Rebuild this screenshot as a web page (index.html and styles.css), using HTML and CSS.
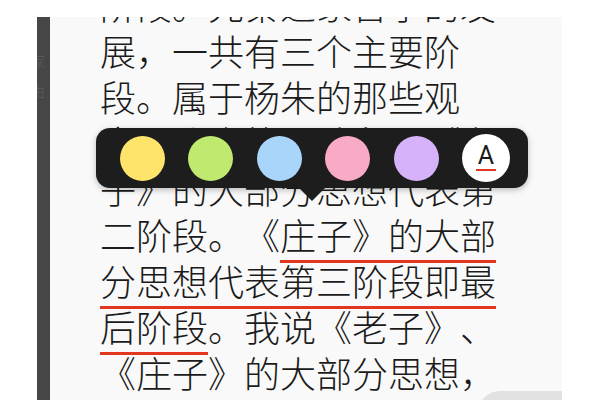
FILE: index.html
```html
<!DOCTYPE html>
<html lang="zh-CN">
<head>
<meta charset="utf-8">
<link rel="stylesheet" href="styles.css">
</head>
<body>
<div class="screen">
  <div class="bar"><div class="bar-text">家<br>由</div></div>
  <div class="page">
    <p class="text">阶段。先秦道家哲学的发展，一共有三个主要阶段。属于杨朱的那些观念，代表第一阶段。《老子》的大部分思想代表第二阶段。《<span class="mark">庄子》的大部分思想代表第三阶段即最后阶段</span>。我说《老子》、《庄子》的大部分思想，</p>
    <div class="toolbar">
      <span class="dot yellow"></span>
      <span class="dot green"></span>
      <span class="dot blue"></span>
      <span class="dot pink"></span>
      <span class="dot purple"></span>
      <span class="dot font-btn"><span class="font-a">A</span></span>
    </div>
    <div class="pill"></div>
  </div>
</div>
</body>
</html>
```
FILE: styles.css
```css
html, body {
  margin: 0;
  padding: 0;
  background: #ffffff;
}
.screen {
  display: flex;
  width: 525px;
  height: 383px;
  padding: 17px 0 0 37px;
}
.bar {
  width: 13px;
  background: #464646;
  overflow: hidden;
}
.bar-text {
  margin-top: 29px;
  margin-left: -6px;
  font-family: "Noto Sans CJK SC", sans-serif;
  font-size: 14px;
  line-height: 30px;
  color: #575757;
}
.page {
  flex: 1;
  position: relative;
  background: #f9f9f9;
  overflow: hidden;
  padding-left: 50px;
}
.text {
  width: 400px;
  margin: -36px 0 0 0;
  font-family: "Noto Sans CJK SC", sans-serif;
  font-size: 36px;
  font-weight: 300;
  line-height: 46px;
  color: #1b1b1b;
  text-spacing-trim: space-all;
}
.mark {
  padding-bottom: 3px;
  background-image: linear-gradient(#e2361f, #e2361f);
  background-size: 100% 3px;
  background-position: left bottom;
  background-repeat: no-repeat;
}
.toolbar {
  position: absolute;
  left: 46px;
  top: 111px;
  width: 432px;
  height: 60px;
  box-sizing: border-box;
  padding-left: 23.5px;
  display: flex;
  align-items: center;
  gap: 23.5px;
  background: #1d1d1d;
  border-radius: 14px;
  box-shadow: 0 2px 6px rgba(0, 0, 0, 0.25);
}
.toolbar::after {
  content: "";
  position: absolute;
  left: 203px;
  top: 60px;
  border-left: 13px solid transparent;
  border-right: 13px solid transparent;
  border-top: 13px solid #1d1d1d;
}
.dot {
  width: 45px;
  height: 45px;
  border-radius: 50%;
  flex: none;
}
.yellow { background: #ffe46b; }
.green { background: #bfe96f; }
.blue { background: #aad5fb; }
.pink { background: #f9aac6; }
.purple { background: #d6b2fb; }
.font-btn {
  width: 48px;
  height: 48px;
  background: #ffffff;
  display: flex;
  align-items: center;
  justify-content: center;
}
.font-a {
  font-family: "Roboto", "Liberation Sans", sans-serif;
  font-size: 25px;
  line-height: 22px;
  color: #1b1b1b;
  padding: 0 2px 2px;
  border-bottom: 2px solid #e2361f;
}
.pill {
  position: absolute;
  left: 428px;
  top: 374px;
  width: 110px;
  height: 44px;
  border-radius: 22px;
  background: #e2e2e2;
}
```
